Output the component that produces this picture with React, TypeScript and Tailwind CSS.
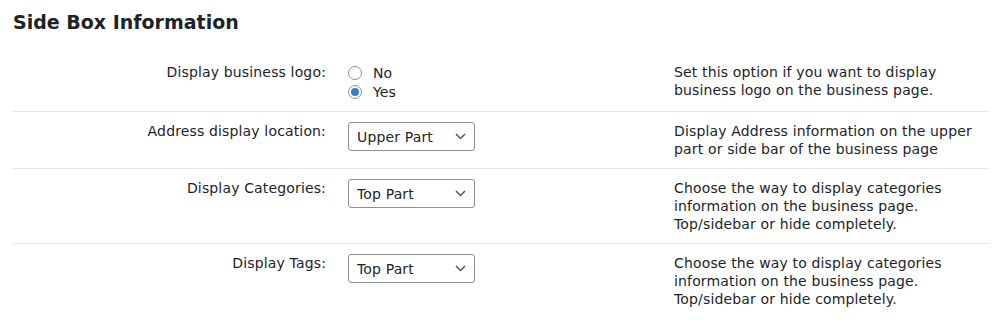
import React, { useState } from 'react';

type Row = {
  label: string;
  kind: 'radio' | 'select';
  value: string;
  options?: string[];
  help: string;
};

const rows: Row[] = [
  {
    label: 'Display business logo:',
    kind: 'radio',
    value: 'Yes',
    options: ['No', 'Yes'],
    help: 'Set this option if you want to display business logo on the business page.',
  },
  {
    label: 'Address display location:',
    kind: 'select',
    value: 'Upper Part',
    options: ['Upper Part', 'Side Bar'],
    help: 'Display Address information on the upper part or side bar of the business page',
  },
  {
    label: 'Display Categories:',
    kind: 'select',
    value: 'Top Part',
    options: ['Top Part', 'Sidebar', 'Hide'],
    help: 'Choose the way to display categories information on the business page. Top/sidebar or hide completely.',
  },
  {
    label: 'Display Tags:',
    kind: 'select',
    value: 'Top Part',
    options: ['Top Part', 'Sidebar', 'Hide'],
    help: 'Choose the way to display categories information on the business page. Top/sidebar or hide completely.',
  },
];

function Radios({ options, initial }: { options: string[]; initial: string }) {
  const [val, setVal] = useState(initial);
  return (
    <div className="flex flex-col">
      {options.map((o) => (
        <label key={o} className="flex items-center gap-[11px] h-[19px] cursor-pointer" onClick={() => setVal(o)}>
          <span className="w-[14px] h-[14px] rounded-full border border-[#8c8f94] bg-white flex items-center justify-center">
            {val === o && <span className="w-[8px] h-[8px] rounded-full bg-[#3582c4]" />}
          </span>
          <span>{o}</span>
        </label>
      ))}
    </div>
  );
}

function Select({ options, initial }: { options: string[]; initial: string }) {
  const [val, setVal] = useState(initial);
  return (
    <div className="relative w-[127px] h-[29px]">
      <select
        value={val}
        onChange={(e) => setVal(e.target.value)}
        className="appearance-none w-full h-full border border-[#8c8f94] rounded-[3px] bg-white pl-[8px] pr-6 text-[14px] tracking-[0.15px] text-[#1d2327] outline-none"
        style={{ fontFamily: 'inherit' }}
      >
        {options.map((o) => (
          <option key={o}>{o}</option>
        ))}
      </select>
      <svg
        className="absolute right-[9px] top-[10px] pointer-events-none"
        width="11"
        height="8"
        viewBox="0 0 11 8"
        fill="none"
        stroke="#50575e"
        strokeWidth="1.5"
      >
        <path d="M1 2l4.5 4.5L10 2" />
      </svg>
    </div>
  );
}

export default function App() {
  return (
    <div
      className="w-[996px] h-[322px] bg-white text-[#1d2327] pl-[13px] pr-[6px] pt-[10px]"
      style={{ fontFamily: '"DejaVu Sans", Verdana, sans-serif' }}
    >
      <h2 className="text-[19px] leading-[24px] font-bold mb-[19px]">Side Box Information</h2>
      <div className="text-[14px] leading-[18px] tracking-[0.15px]">
        {rows.map((r, i) => (
          <div
            key={i}
            className={`grid grid-cols-[335px_326px_1fr] py-[10px] ${i < rows.length - 1 ? 'border-b border-[#e8e8e8]' : ''}`}
          >
            <div className="text-right pr-[22px]">{r.label}</div>
            <div>
              {r.kind === 'radio' ? (
                <Radios options={r.options!} initial={r.value} />
              ) : (
                <Select options={r.options!} initial={r.value} />
              )}
            </div>
            <div className="pr-[4px]">{r.help}</div>
          </div>
        ))}
      </div>
    </div>
  );
}
